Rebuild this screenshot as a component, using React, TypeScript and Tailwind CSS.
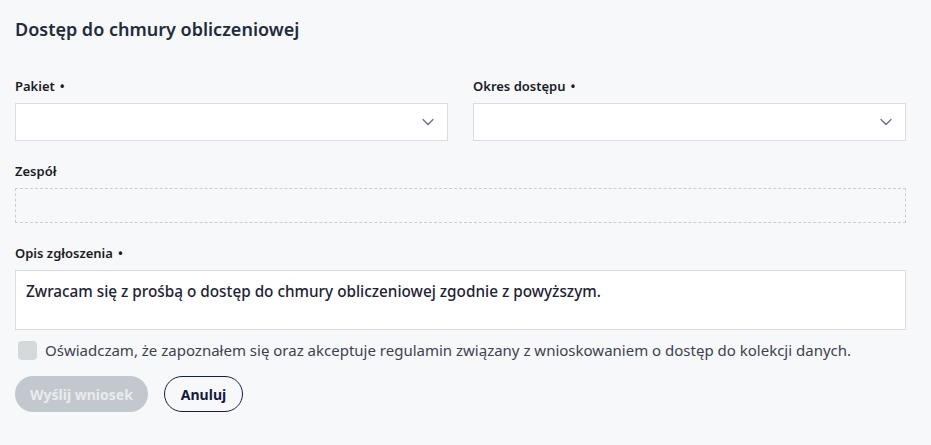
import { ChevronDown } from 'lucide-react';

function Label({ text, required }: { text: string; required?: boolean }) {
  return (
    <p className="text-[13px] font-semibold text-[#1b1b1f] leading-[18px] mb-[8px]">
      {text}
      {required && <span className="ml-[5px]">•</span>}
    </p>
  );
}

function Select({ label }: { label: string }) {
  return (
    <div className="flex-1">
      <Label text={label} required />
      <div className="h-[38px] bg-white border border-[#d9dde3] flex items-center justify-end pr-[9px]">
        <ChevronDown className="w-[20px] h-[20px] text-[#5f6f86]" strokeWidth={1.5} />
      </div>
    </div>
  );
}

export default function App() {
  return (
    <div
      className="min-h-[445px] bg-[#f7f8fa] pl-[15px] pr-[25px] pt-[17px]"
      style={{ fontFamily: '"Noto Sans", "Open Sans", sans-serif' }}
    >
      <h1 className="text-[18px] font-semibold text-[#222b3c] leading-[24px]">
        Dostęp do chmury obliczeniowej
      </h1>

      <div className="flex gap-[25px] mt-[36px]">
        <Select label="Pakiet" />
        <Select label="Okres dostępu" />
      </div>

      <div className="mt-[21px]">
        <Label text="Zespół" />
        <div className="h-[35px] border border-dashed border-[#c9cdd4]" />
      </div>

      <div className="mt-[21px]">
        <Label text="Opis zgłoszenia" required />
        <div className="h-[60px] bg-white border border-[#d9dde3] px-[10px] pt-[9px]">
          <p className="text-[15.3px] font-medium text-[#1e2333] leading-[22px]">
            Zwracam się z prośbą o dostęp do chmury obliczeniowej zgodnie z powyższym.
          </p>
        </div>
      </div>

      <label className="flex items-center gap-[8px] mt-[10px] ml-[3px]">
        <span className="w-[19px] h-[19px] rounded-[4px] bg-[#d5d9de] shrink-0" />
        <span className="text-[15px] text-[#3d4250] leading-[20px]">
          Oświadczam, że zapoznałem się oraz akceptuje regulamin związany z wnioskowaniem o dostęp do kolekcji danych.
        </span>
      </label>

      <div className="flex gap-[16px] mt-[16px]">
        <button className="h-[36px] px-[15px] rounded-full bg-[#c3c8cf] text-[#e9ebee] text-[14px] font-bold">
          Wyślij wniosek
        </button>
        <button className="h-[36px] px-[16px] rounded-full border border-[#1a1d45] text-[#151a3d] text-[14px] font-bold">
          Anuluj
        </button>
      </div>
    </div>
  );
}
